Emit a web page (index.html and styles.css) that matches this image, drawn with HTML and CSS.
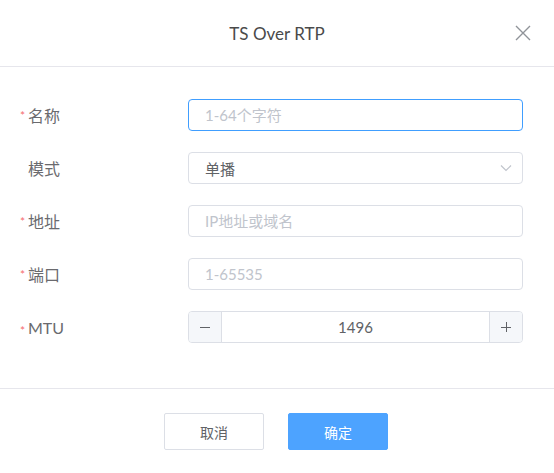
FILE: index.html
```html
<!DOCTYPE html>
<html>

<head>
  <title>TS Over RTP</title>
  <link rel="stylesheet" href="styles.css">
</head>

<body>
  <div class="dialog">
    <div class="dialog-header">
      <span class="dialog-title">TS Over RTP</span>
      <span class="dialog-close">
        <svg width="16" height="16" viewBox="0 0 16 16">
          <path d="M1 1L15 15M15 1L1 15" stroke="#909399" stroke-width="1.4" fill="none" />
        </svg>
      </span>
    </div>

    <div class="dialog-body">
      <div class="form-row">
        <label class="form-label required">名称</label>
        <div class="form-control">
          <input class="input focused" placeholder="1-64个字符">
        </div>
      </div>
      <div class="form-row">
        <label class="form-label">模式</label>
        <div class="form-control">
          <div class="input select">
            <span>单播</span>
            <svg class="chevron" width="12" height="8" viewBox="0 0 12 8">
              <path d="M1 1.5L6 6.5L11 1.5" stroke="#c0c4cc" stroke-width="1.2" fill="none" />
            </svg>
          </div>
        </div>
      </div>
      <div class="form-row">
        <label class="form-label required">地址</label>
        <div class="form-control">
          <input class="input" placeholder="IP地址或域名">
        </div>
      </div>
      <div class="form-row">
        <label class="form-label required">端口</label>
        <div class="form-control">
          <input class="input" placeholder="1-65535">
        </div>
      </div>
      <div class="form-row">
        <label class="form-label required">MTU</label>
        <div class="form-control">
          <div class="number-input">
            <span class="step minus">
              <svg width="12" height="12" viewBox="0 0 12 12">
                <path d="M1 6.5H11" stroke="#606266" stroke-width="1" fill="none" />
              </svg>
            </span>
            <span class="number-value">1496</span>
            <span class="step plus">
              <svg width="12" height="12" viewBox="0 0 12 12">
                <path d="M1 6.5H11M6.5 1V11" stroke="#606266" stroke-width="1" fill="none" />
              </svg>
            </span>
          </div>
        </div>
      </div>
    </div>

    <div class="dialog-footer">
      <button class="btn">取消</button>
      <button class="btn btn-primary">确定</button>
    </div>
  </div>
</body>

</html>
```

FILE: styles.css
```css
body {
  margin: 0;
  background: #fff;
  font-family: Lato, "Noto Sans CJK SC", sans-serif;
  color: #606266;
}

.dialog {
  width: 554px;
  height: 473px;
  display: flex;
  flex-direction: column;
}

.dialog-header {
  height: 66px;
  border-bottom: 1px solid #e6e6ec;
  display: flex;
  align-items: center;
  justify-content: center;
  position: relative;
}

.dialog-title {
  font-size: 17px;
  color: #4a4a4a;
}

.dialog-close {
  position: absolute;
  right: 23px;
  top: 25px;
  display: flex;
}

.dialog-body {
  padding: 32px 31px 0 20px;
  display: flex;
  flex-direction: column;
  gap: 21px;
  height: 322px;
  box-sizing: border-box;
  border-bottom: 1px solid #e6e6ec;
}

.form-row {
  display: flex;
  align-items: center;
  height: 32px;
}

.form-label {
  width: 168px;
  padding-left: 8px;
  box-sizing: border-box;
  font-size: 16px;
  color: #6a6a6e;
  position: relative;
}

.form-label.required::before {
  content: "*";
  position: absolute;
  left: 0;
  top: 5px;
  color: #f56c6c;
  font-size: 12px;
}

.form-control {
  flex: 1;
}

.input {
  width: 100%;
  height: 32px;
  box-sizing: border-box;
  border: 1px solid #dcdfe6;
  border-radius: 4px;
  padding: 0 16px;
  font-family: inherit;
  font-size: 15px;
  color: #606266;
  outline: none;
  background: #fff;
}

.input::placeholder {
  color: #c0c4cc;
}

.input.focused {
  border-color: #409eff;
}

.select {
  display: flex;
  align-items: center;
  justify-content: space-between;
  padding-right: 10px;
}

.number-input {
  display: flex;
  height: 32px;
  box-sizing: border-box;
  border: 1px solid #dcdfe6;
  border-radius: 4px;
  overflow: hidden;
}

.step {
  width: 32px;
  background: #f5f7fa;
  display: flex;
  align-items: center;
  justify-content: center;
}

.minus {
  border-right: 1px solid #dcdfe6;
}

.plus {
  border-left: 1px solid #dcdfe6;
}

.number-value {
  flex: 1;
  display: flex;
  align-items: center;
  justify-content: center;
  font-size: 15px;
}

.dialog-footer {
  display: flex;
  justify-content: center;
  gap: 24px;
  padding: 24px 2px 0 0;
}

.btn {
  width: 100px;
  height: 37px;
  border: 1px solid #dcdfe6;
  border-radius: 2px;
  background: #fff;
  color: #606266;
  font-family: inherit;
  font-size: 14px;
}

.btn-primary {
  background: #4da3ff;
  border-color: #4da3ff;
  color: #fff;
}
```
